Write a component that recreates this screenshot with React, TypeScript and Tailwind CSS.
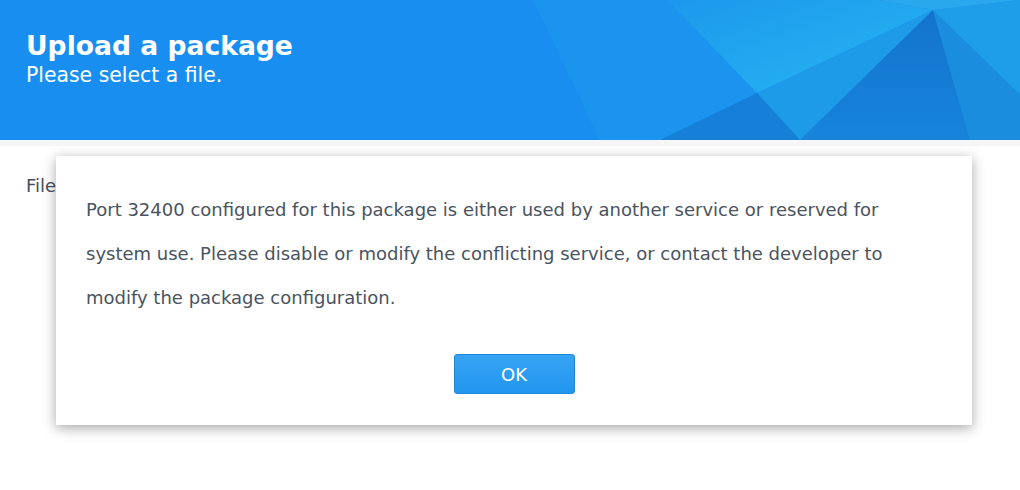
import React from 'react';

function HeaderArt() {
  return (
    <svg className="absolute inset-0 h-full w-full" viewBox="0 0 1020 140" preserveAspectRatio="none">
      <defs>
        <linearGradient id="lite" x1="0" y1="0" x2="1" y2="1">
          <stop offset="0" stopColor="#1c98ec" />
          <stop offset="1" stopColor="#27b6f2" />
        </linearGradient>
        <linearGradient id="dark" x1="0" y1="0" x2="0" y2="1">
          <stop offset="0" stopColor="#1373cc" />
          <stop offset="1" stopColor="#1784dc" />
        </linearGradient>
      </defs>
      <rect width="1020" height="140" fill="#188ff0" />
      <polygon points="533,0 667,0 757,93 660,140 600,140" fill="#1a94ee" />
      <polygon points="667,0 880,0 933,10 757,93" fill="url(#lite)" />
      <polygon points="880,0 1020,0 933,10" fill="#2aa8ee" />
      <polygon points="757,93 933,10 800,140" fill="#1d9be8" />
      <polygon points="660,140 757,93 800,140" fill="#1680d8" />
      <polygon points="933,10 800,140 970,140" fill="url(#dark)" />
      <polygon points="933,10 1020,0 1020,95" fill="#1e9ee8" />
      <polygon points="933,10 1020,95 1020,140 970,140" fill="#1a8ddf" />
    </svg>
  );
}

export default function App() {
  return (
    <div className="relative h-[490px] w-[1020px] overflow-hidden bg-white font-['DejaVu_Sans',Verdana,sans-serif]">
      <header className="relative h-[140px] overflow-hidden">
        <HeaderArt />
        <div className="relative px-[26px] pt-[30px] text-white">
          <h1 className="text-[26.6px] font-bold leading-[32px]">Upload a package</h1>
          <p className="text-[20.4px] leading-[26px]">Please select a file.</p>
        </div>
      </header>
      <div className="h-[6px] bg-[#f6f6f6]" />

      <div className="px-[26px] pt-[26px] text-[18px] text-[#4a4f57]">File</div>

      <div className="absolute left-[56px] top-[156px] flex h-[269px] w-[916px] flex-col bg-white shadow-[0_3px_12px_rgba(0,0,0,0.35)]">
        <p className="whitespace-nowrap px-[30px] pt-[32px] text-[18px] leading-[44px] text-[#4a5360]">
          Port 32400 configured for this package is either used by another service or reserved for
          <br />
          system use. Please disable or modify the conflicting service, or contact the developer to
          <br />
          modify the package configuration.
        </p>
        <div className="mt-auto flex justify-center pb-[31px]">
          <button className="h-[40px] w-[121px] rounded-[3px] border border-[#1f86d8] bg-gradient-to-b from-[#36a4f4] to-[#2196ee] text-[18px] text-white">
            OK
          </button>
        </div>
      </div>
    </div>
  );
}
